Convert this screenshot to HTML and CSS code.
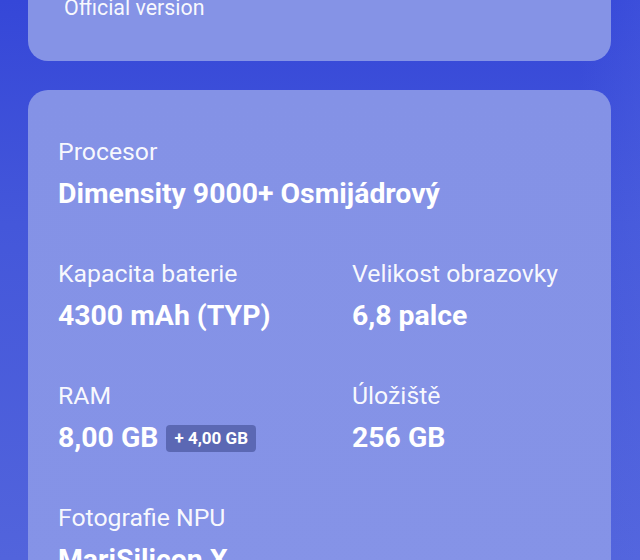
FILE: index.html
```html
<!DOCTYPE html>
<html lang="cs">
<head>
<meta charset="utf-8">
<link rel="stylesheet" href="styles.css">
</head>
<body>
<div class="page">
  <section class="card card-top">
    <div class="version">Official version</div>
  </section>
  <section class="card card-specs">
    <div class="specs">
      <div class="item wide">
        <div class="label">Procesor</div>
        <div class="value">Dimensity 9000+ Osmijádrový</div>
      </div>
      <div class="item">
        <div class="label">Kapacita baterie</div>
        <div class="value">4300 mAh (TYP)</div>
      </div>
      <div class="item">
        <div class="label">Velikost obrazovky</div>
        <div class="value">6,8 palce</div>
      </div>
      <div class="item">
        <div class="label">RAM</div>
        <div class="value">8,00 GB <span class="badge">+ 4,00 GB</span></div>
      </div>
      <div class="item">
        <div class="label">Úložiště</div>
        <div class="value">256 GB</div>
      </div>
      <div class="item">
        <div class="label">Fotografie NPU</div>
        <div class="value">MariSilicon X</div>
      </div>
    </div>
  </section>
</div>
</body>
</html>
```

FILE: styles.css
```css
html, body {
  margin: 0;
  padding: 0;
  height: 100%;
  overflow: hidden;
}
body {
  font-family: Roboto, "Noto Sans", sans-serif;
  color: #ffffff;
  background: linear-gradient(180deg, #3547d8 0%, #4457da 40%, #5264dc 100%);
}
.page {
  padding: 0 29px 0 28px;
  display: flex;
  flex-direction: column;
  gap: 29px;
  background: linear-gradient(90deg, rgba(0,0,0,0) 0px, rgba(0,0,0,0) 580px, rgba(90,110,230,0.2) 640px);
  min-height: 100%;
}
.card {
  background: #8593e6;
  border-radius: 20px;
}
.card-top {
  border-radius: 0 0 20px 20px;
  height: 61px;
  padding: 0 36px;
  box-sizing: border-box;
}
.version {
  font-size: 21.4px;
  line-height: 24px;
  margin-top: -4px;
  color: rgba(255,255,255,0.95);
}
.card-specs {
  padding: 46px 30px 40px 30px;
  background: linear-gradient(180deg, #8492e6 0%, #8593e7 100%);
}
.specs {
  display: grid;
  grid-template-columns: 294px 1fr;
  row-gap: 46px;
}
.item {
  display: flex;
  flex-direction: column;
  gap: 8px;
}
.wide {
  grid-column: 1 / -1;
}
.label {
  font-size: 24.8px;
  line-height: 32px;
  color: rgba(255,255,255,0.95);
}
.value {
  font-size: 28.4px;
  line-height: 36px;
  font-weight: 700;
  display: flex;
  align-items: center;
  white-space: nowrap;
}
.badge {
  margin-left: 8px;
  font-size: 17px;
  font-weight: 700;
  line-height: 27px;
  height: 27px;
  padding: 0 8px;
  border-radius: 4px;
  background: #5b68b4;
}
```
